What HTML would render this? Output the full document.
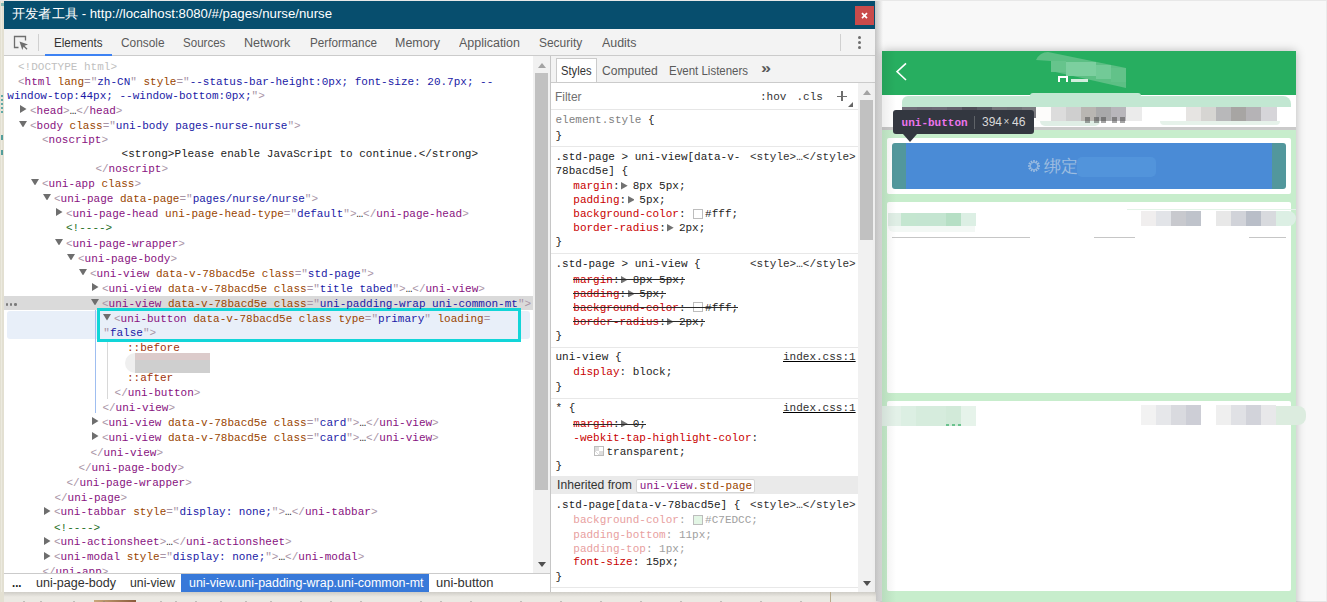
<!DOCTYPE html>
<html><head><meta charset="utf-8"><style>
*{margin:0;padding:0;box-sizing:border-box}
html,body{width:1327px;height:602px;overflow:hidden;background:#f8f8f8;position:relative}
body>div{position:absolute}
.m{font-family:"Liberation Mono", monospace;font-size:11px;line-height:14px;white-space:pre}
.s{font-family:"Liberation Sans", sans-serif;white-space:pre}
</style></head><body>
<div style="left:0px;top:0px;width:4px;height:602px;background:#e3e0d2;"></div>
<div style="left:1px;top:0px;width:1px;height:602px;background:#eceadf;"></div>
<div style="left:0px;top:592px;width:876px;height:10px;background:#e9e7e0;"></div>
<div style="left:4px;top:592px;width:872px;height:4px;background:linear-gradient(#b9b8b4,#e9e7e0);"></div>
<div style="left:875px;top:0px;width:8px;height:602px;background:linear-gradient(90deg,#c4c4c4,#f8f8f8);"></div>
<div style="left:1325.5px;top:0px;width:1.5px;height:602px;background:#ebebeb;"></div>
<div style="left:876px;top:600.5px;width:451px;height:1.5px;background:#e4e4e4;"></div>
<div style="left:0px;top:0px;width:1327px;height:1px;background:#e8e8e8;"></div>
<div style="left:0px;top:592px;width:876px;height:10px;background:#ebe9e3;"></div>
<div style="left:4px;top:592px;width:872px;height:5px;background:linear-gradient(#cfcdc7,#ebe9e3);"></div>
<div style="left:0px;top:592px;width:4px;height:10px;background:#e3e0d2;"></div>
<div style="left:94px;top:600px;width:42px;height:2px;background:linear-gradient(90deg,#c9a77a,#8a5a3a);"></div>
<div style="left:23px;top:600.5px;width:2px;height:1.5px;background:#7a7a7a;opacity:0.4;"></div>
<div style="left:40px;top:600.5px;width:2px;height:1.5px;background:#7a7a7a;opacity:0.4;"></div>
<div style="left:73px;top:600.5px;width:2px;height:1.5px;background:#7a7a7a;opacity:0.4;"></div>
<div style="left:103px;top:600.5px;width:2px;height:1.5px;background:#7a7a7a;opacity:0.4;"></div>
<div style="left:160px;top:600.5px;width:2px;height:1.5px;background:#7a7a7a;opacity:0.4;"></div>
<div style="left:175px;top:600.5px;width:2px;height:1.5px;background:#7a7a7a;opacity:0.4;"></div>
<div style="left:195px;top:600.5px;width:2px;height:1.5px;background:#7a7a7a;opacity:0.4;"></div>
<div style="left:220px;top:600.5px;width:2px;height:1.5px;background:#7a7a7a;opacity:0.4;"></div>
<div style="left:245px;top:600.5px;width:2px;height:1.5px;background:#7a7a7a;opacity:0.4;"></div>
<div style="left:270px;top:600.5px;width:2px;height:1.5px;background:#7a7a7a;opacity:0.4;"></div>
<div style="left:300px;top:600.5px;width:2px;height:1.5px;background:#7a7a7a;opacity:0.4;"></div>
<div style="left:330px;top:600.5px;width:2px;height:1.5px;background:#7a7a7a;opacity:0.4;"></div>
<div style="left:360px;top:600.5px;width:2px;height:1.5px;background:#7a7a7a;opacity:0.4;"></div>
<div style="left:420px;top:600.5px;width:2px;height:1.5px;background:#7a7a7a;opacity:0.4;"></div>
<div style="left:440px;top:600.5px;width:2px;height:1.5px;background:#7a7a7a;opacity:0.4;"></div>
<div style="left:470px;top:600.5px;width:2px;height:1.5px;background:#7a7a7a;opacity:0.4;"></div>
<div style="left:520px;top:600.5px;width:2px;height:1.5px;background:#7a7a7a;opacity:0.4;"></div>
<div style="left:560px;top:600.5px;width:2px;height:1.5px;background:#7a7a7a;opacity:0.4;"></div>
<div style="left:600px;top:600.5px;width:2px;height:1.5px;background:#7a7a7a;opacity:0.4;"></div>
<div style="left:640px;top:600.5px;width:2px;height:1.5px;background:#7a7a7a;opacity:0.4;"></div>
<div style="left:680px;top:600.5px;width:2px;height:1.5px;background:#7a7a7a;opacity:0.4;"></div>
<div style="left:720px;top:600.5px;width:2px;height:1.5px;background:#7a7a7a;opacity:0.4;"></div>
<div style="left:760px;top:600.5px;width:2px;height:1.5px;background:#7a7a7a;opacity:0.4;"></div>
<div style="left:800px;top:600.5px;width:2px;height:1.5px;background:#7a7a7a;opacity:0.4;"></div>
<div style="left:830px;top:592px;width:1px;height:10px;background:#b8a98a;"></div>
<div style="left:1px;top:95px;width:2px;height:1.5px;background:#3f9a9a;opacity:0.8;"></div>
<div style="left:1px;top:99px;width:2px;height:1.5px;background:#3f9a9a;opacity:0.8;"></div>
<div style="left:1px;top:103px;width:2px;height:1.5px;background:#3f9a9a;opacity:0.8;"></div>
<div style="left:1px;top:107px;width:2px;height:1.5px;background:#3f9a9a;opacity:0.8;"></div>
<div style="left:1px;top:111px;width:2px;height:1.5px;background:#3f9a9a;opacity:0.8;"></div>
<div style="left:1px;top:135px;width:2px;height:5px;background:#2e8c8c;opacity:0.8;"></div>
<div style="left:1px;top:150px;width:2px;height:5px;background:#2e8c8c;opacity:0.8;"></div>
<div style="left:1px;top:3px;width:3px;height:3px;background:#4aa0a0;opacity:0.6;"></div>
<div style="left:4px;top:1px;width:871px;height:28px;background:#074e6e;"></div>
<div class="s" style="left:12px;top:5.50px;font-size:13px;line-height:16px;color:#ffffff;font-weight:normal;transform:scaleX(1.0157);transform-origin:0 0;">开发者工具 - http://localhost:8080/#/pages/nurse/nurse</div>
<div style="left:855px;top:6px;width:19px;height:19px;background:#c94b4b;"></div>
<div style="left:860px;top:11px;width:10px;height:10px"><svg style="display:block" width="10" height="10"><path d="M2 2.2L7 7.2M7 2.2L2 7.2" stroke="#fff" stroke-width="1.7"/></svg></div>
<div style="left:4px;top:29px;width:871px;height:26px;background:#f3f3f3;"></div>
<div style="left:4px;top:55px;width:871px;height:1px;background:#cbcbcb;"></div>
<div style="left:13px;top:35px;width:16px;height:16px"><svg style="display:block" width="16" height="16" viewBox="0 0 16 16"><path d="M5.5 12.5H1.5V1.5H12.5V5.5" fill="none" stroke="#6e6e6e" stroke-width="1.3"/><path d="M6.5 6.5L15 9.5L11.5 10.8L14.5 13.8L13.6 14.7L10.6 11.7L9.3 15Z" fill="#6e6e6e"/></svg></div>
<div style="left:38px;top:34px;width:1px;height:17px;background:#d0d0d0;"></div>
<div class="s" style="left:54.2px;top:35.84px;font-size:12px;line-height:14px;color:#333333;font-weight:normal;transform:scaleX(0.9694);transform-origin:0 0;">Elements</div>
<div class="s" style="left:120.9px;top:35.84px;font-size:12px;line-height:14px;color:#5a5a5a;font-weight:normal;transform:scaleX(0.9879);transform-origin:0 0;">Console</div>
<div class="s" style="left:183.1px;top:35.84px;font-size:12px;line-height:14px;color:#5a5a5a;font-weight:normal;transform:scaleX(0.9630);transform-origin:0 0;">Sources</div>
<div class="s" style="left:244.1px;top:35.84px;font-size:12px;line-height:14px;color:#5a5a5a;font-weight:normal;transform:scaleX(1.0496);transform-origin:0 0;">Network</div>
<div class="s" style="left:309.7px;top:35.84px;font-size:12px;line-height:14px;color:#5a5a5a;font-weight:normal;transform:scaleX(0.9752);transform-origin:0 0;">Performance</div>
<div class="s" style="left:395.3px;top:35.84px;font-size:12px;line-height:14px;color:#5a5a5a;font-weight:normal;transform:scaleX(1.0382);transform-origin:0 0;">Memory</div>
<div class="s" style="left:459.1px;top:35.84px;font-size:12px;line-height:14px;color:#5a5a5a;font-weight:normal;transform:scaleX(1.0389);transform-origin:0 0;">Application</div>
<div class="s" style="left:539.0px;top:35.84px;font-size:12px;line-height:14px;color:#5a5a5a;font-weight:normal;transform:scaleX(0.9963);transform-origin:0 0;">Security</div>
<div class="s" style="left:601.5px;top:35.84px;font-size:12px;line-height:14px;color:#5a5a5a;font-weight:normal;transform:scaleX(1.0342);transform-origin:0 0;">Audits</div>
<div style="left:45px;top:54px;width:67px;height:2px;background:#3d82f3;"></div>
<div style="left:840px;top:34px;width:1px;height:17px;background:#d0d0d0;"></div>
<div style="left:857.5px;top:35.5px;width:3px;height:3px;border-radius:50%;background:#6e6e6e"></div>
<div style="left:857.5px;top:40.5px;width:3px;height:3px;border-radius:50%;background:#6e6e6e"></div>
<div style="left:857.5px;top:45.5px;width:3px;height:3px;border-radius:50%;background:#6e6e6e"></div>
<div style="left:4px;top:56px;width:546px;height:517px;background:#ffffff;"></div>
<div style="left:4px;top:296px;width:529px;height:13.5px;background:#dadada;"></div>
<div style="left:5.7px;top:303.3px;width:2.6px;height:2.6px;border-radius:50%;background:#7a7a7a"></div>
<div style="left:9.899999999999999px;top:303.3px;width:2.6px;height:2.6px;border-radius:50%;background:#7a7a7a"></div>
<div style="left:14.1px;top:303.3px;width:2.6px;height:2.6px;border-radius:50%;background:#7a7a7a"></div>
<div style="left:7px;top:311px;width:523px;height:28px;background:#e8eff9;border-radius:3px;"></div>
<div style="left:97px;top:308px;width:424px;height:34px;background:transparent;border:3px solid #12d5d8;"></div>
<div style="left:95px;top:310px;width:1px;height:103px;background:#9fbef0;"></div>
<div style="left:107px;top:342px;width:1px;height:57px;background:#d8d8d8;"></div>
<div class="m" style="left:18px;top:59.599999999999994px;"><span style="color:#c0c0c0">&lt;!DOCTYPE html&gt;</span></div>
<div class="m" style="left:18px;top:74.5px;"><span style="color:#a894a6">&lt;</span><span style="color:#881280">html</span><span style="color:#994500"> lang</span><span style="color:#a894a6">="</span><span style="color:#1a1aa6">zh-CN</span><span style="color:#a894a6">"</span><span style="color:#994500"> style</span><span style="color:#a894a6">="</span><span style="color:#1a1aa6">--status-bar-height:0px; font-size: 20.7px; --</span></div>
<div class="m" style="left:7.3px;top:88.9px;"><span style="color:#1a1aa6">window-top:44px; --window-bottom:0px;</span><span style="color:#a894a6">"&gt;</span></div>
<div class="m" style="left:30px;top:103.5px;"><span style="color:#a894a6">&lt;</span><span style="color:#881280">head</span><span style="color:#a894a6">&gt;</span><span style="color:#222222">…</span><span style="color:#a894a6">&lt;/</span><span style="color:#881280">head</span><span style="color:#a894a6">&gt;</span></div>
<div style="left:20px;top:104.7px;width:6.5px;height:8px"><svg width="6.5" height="8" style="display:block"><polygon points="0,0 6.5,4.0 0,8" fill="#6e6e6e"/></svg></div>
<div class="m" style="left:30px;top:118.5px;"><span style="color:#a894a6">&lt;</span><span style="color:#881280">body</span><span style="color:#994500"> class</span><span style="color:#a894a6">="</span><span style="color:#1a1aa6">uni-body pages-nurse-nurse</span><span style="color:#a894a6">"&gt;</span></div>
<div style="left:19px;top:120.7px;width:8px;height:6.5px"><svg width="8" height="6.5" style="display:block"><polygon points="0,0 8,0 4.0,6.5" fill="#6e6e6e"/></svg></div>
<div class="m" style="left:42px;top:133.3px;"><span style="color:#a894a6">&lt;</span><span style="color:#881280">noscript</span><span style="color:#a894a6">&gt;</span></div>
<div class="m" style="left:121.6px;top:147.4px;"><span style="color:#222222">&lt;strong&gt;Please enable JavaScript to continue.&lt;/strong&gt;</span></div>
<div class="m" style="left:95.4px;top:161.5px;"><span style="color:#a894a6">&lt;/</span><span style="color:#881280">noscript</span><span style="color:#a894a6">&gt;</span></div>
<div class="m" style="left:42px;top:176.6px;"><span style="color:#a894a6">&lt;</span><span style="color:#881280">uni-app</span><span style="color:#994500"> class</span><span style="color:#a894a6">&gt;</span></div>
<div style="left:31px;top:178.79999999999998px;width:8px;height:6.5px"><svg width="8" height="6.5" style="display:block"><polygon points="0,0 8,0 4.0,6.5" fill="#6e6e6e"/></svg></div>
<div class="m" style="left:54px;top:191.6px;"><span style="color:#a894a6">&lt;</span><span style="color:#881280">uni-page</span><span style="color:#994500"> data-page</span><span style="color:#a894a6">="</span><span style="color:#1a1aa6">pages/nurse/nurse</span><span style="color:#a894a6">"&gt;</span></div>
<div style="left:43px;top:193.79999999999998px;width:8px;height:6.5px"><svg width="8" height="6.5" style="display:block"><polygon points="0,0 8,0 4.0,6.5" fill="#6e6e6e"/></svg></div>
<div class="m" style="left:66px;top:206.6px;"><span style="color:#a894a6">&lt;</span><span style="color:#881280">uni-page-head</span><span style="color:#994500"> uni-page-head-type</span><span style="color:#a894a6">="</span><span style="color:#1a1aa6">default</span><span style="color:#a894a6">"&gt;</span><span style="color:#222222">…</span><span style="color:#a894a6">&lt;/</span><span style="color:#881280">uni-page-head</span><span style="color:#a894a6">&gt;</span></div>
<div style="left:56px;top:207.79999999999998px;width:6.5px;height:8px"><svg width="6.5" height="8" style="display:block"><polygon points="0,0 6.5,4.0 0,8" fill="#6e6e6e"/></svg></div>
<div class="m" style="left:66px;top:221.4px;"><span style="color:#236e25">&lt;!----&gt;</span></div>
<div class="m" style="left:66px;top:236.6px;"><span style="color:#a894a6">&lt;</span><span style="color:#881280">uni-page-wrapper</span><span style="color:#a894a6">&gt;</span></div>
<div style="left:55px;top:238.79999999999998px;width:8px;height:6.5px"><svg width="8" height="6.5" style="display:block"><polygon points="0,0 8,0 4.0,6.5" fill="#6e6e6e"/></svg></div>
<div class="m" style="left:78px;top:251.60000000000002px;"><span style="color:#a894a6">&lt;</span><span style="color:#881280">uni-page-body</span><span style="color:#a894a6">&gt;</span></div>
<div style="left:67px;top:253.8px;width:8px;height:6.5px"><svg width="8" height="6.5" style="display:block"><polygon points="0,0 8,0 4.0,6.5" fill="#6e6e6e"/></svg></div>
<div class="m" style="left:90px;top:266.6px;"><span style="color:#a894a6">&lt;</span><span style="color:#881280">uni-view</span><span style="color:#994500"> data-v-78bacd5e class</span><span style="color:#a894a6">="</span><span style="color:#1a1aa6">std-page</span><span style="color:#a894a6">"&gt;</span></div>
<div style="left:79px;top:268.8px;width:8px;height:6.5px"><svg width="8" height="6.5" style="display:block"><polygon points="0,0 8,0 4.0,6.5" fill="#6e6e6e"/></svg></div>
<div class="m" style="left:102px;top:281.5px;"><span style="color:#a894a6">&lt;</span><span style="color:#881280">uni-view</span><span style="color:#994500"> data-v-78bacd5e class</span><span style="color:#a894a6">="</span><span style="color:#1a1aa6">title tabed</span><span style="color:#a894a6">"&gt;</span><span style="color:#222222">…</span><span style="color:#a894a6">&lt;/</span><span style="color:#881280">uni-view</span><span style="color:#a894a6">&gt;</span></div>
<div style="left:92px;top:282.7px;width:6.5px;height:8px"><svg width="6.5" height="8" style="display:block"><polygon points="0,0 6.5,4.0 0,8" fill="#6e6e6e"/></svg></div>
<div class="m" style="left:102px;top:296.6px;"><span style="color:#a894a6">&lt;</span><span style="color:#881280">uni-view</span><span style="color:#994500"> data-v-78bacd5e class</span><span style="color:#a894a6">="</span><span style="color:#1a1aa6">uni-padding-wrap uni-common-mt</span><span style="color:#a894a6">"&gt;</span></div>
<div style="left:91px;top:298.8px;width:8px;height:6.5px"><svg width="8" height="6.5" style="display:block"><polygon points="0,0 8,0 4.0,6.5" fill="#6e6e6e"/></svg></div>
<div class="m" style="left:114px;top:311.8px;"><span style="color:#a894a6">&lt;</span><span style="color:#881280">uni-button</span><span style="color:#994500"> data-v-78bacd5e class type</span><span style="color:#a894a6">="</span><span style="color:#1a1aa6">primary</span><span style="color:#a894a6">"</span><span style="color:#994500"> loading</span><span style="color:#a894a6">=</span></div>
<div class="m" style="left:103.3px;top:325.8px;"><span style="color:#a894a6">"</span><span style="color:#1a1aa6">false</span><span style="color:#a894a6">"&gt;</span></div>
<div style="left:103px;top:314.0px;width:8px;height:6.5px"><svg width="8" height="6.5" style="display:block"><polygon points="0,0 8,0 4.0,6.5" fill="#6e6e6e"/></svg></div>
<div class="m" style="left:127px;top:341.0px;"><span style="color:#a0320a">::before</span></div>
<div class="m" style="left:127px;top:370.8px;"><span style="color:#a0320a">::after</span></div>
<div class="m" style="left:114.6px;top:385.8px;"><span style="color:#a894a6">&lt;/</span><span style="color:#881280">uni-button</span><span style="color:#a894a6">&gt;</span></div>
<div class="m" style="left:102.4px;top:400.8px;"><span style="color:#a894a6">&lt;/</span><span style="color:#881280">uni-view</span><span style="color:#a894a6">&gt;</span></div>
<div class="m" style="left:102px;top:415.8px;"><span style="color:#a894a6">&lt;</span><span style="color:#881280">uni-view</span><span style="color:#994500"> data-v-78bacd5e class</span><span style="color:#a894a6">="</span><span style="color:#1a1aa6">card</span><span style="color:#a894a6">"&gt;</span><span style="color:#222222">…</span><span style="color:#a894a6">&lt;/</span><span style="color:#881280">uni-view</span><span style="color:#a894a6">&gt;</span></div>
<div style="left:92px;top:417.0px;width:6.5px;height:8px"><svg width="6.5" height="8" style="display:block"><polygon points="0,0 6.5,4.0 0,8" fill="#6e6e6e"/></svg></div>
<div class="m" style="left:102px;top:430.8px;"><span style="color:#a894a6">&lt;</span><span style="color:#881280">uni-view</span><span style="color:#994500"> data-v-78bacd5e class</span><span style="color:#a894a6">="</span><span style="color:#1a1aa6">card</span><span style="color:#a894a6">"&gt;</span><span style="color:#222222">…</span><span style="color:#a894a6">&lt;/</span><span style="color:#881280">uni-view</span><span style="color:#a894a6">&gt;</span></div>
<div style="left:92px;top:432.0px;width:6.5px;height:8px"><svg width="6.5" height="8" style="display:block"><polygon points="0,0 6.5,4.0 0,8" fill="#6e6e6e"/></svg></div>
<div class="m" style="left:90.4px;top:445.8px;"><span style="color:#a894a6">&lt;/</span><span style="color:#881280">uni-view</span><span style="color:#a894a6">&gt;</span></div>
<div class="m" style="left:78.4px;top:460.8px;"><span style="color:#a894a6">&lt;/</span><span style="color:#881280">uni-page-body</span><span style="color:#a894a6">&gt;</span></div>
<div class="m" style="left:66.4px;top:475.8px;"><span style="color:#a894a6">&lt;/</span><span style="color:#881280">uni-page-wrapper</span><span style="color:#a894a6">&gt;</span></div>
<div class="m" style="left:54.4px;top:490.6px;"><span style="color:#a894a6">&lt;/</span><span style="color:#881280">uni-page</span><span style="color:#a894a6">&gt;</span></div>
<div class="m" style="left:54px;top:505.4px;"><span style="color:#a894a6">&lt;</span><span style="color:#881280">uni-tabbar</span><span style="color:#994500"> style</span><span style="color:#a894a6">="</span><span style="color:#1a1aa6">display: none;</span><span style="color:#a894a6">"&gt;</span><span style="color:#222222">…</span><span style="color:#a894a6">&lt;/</span><span style="color:#881280">uni-tabbar</span><span style="color:#a894a6">&gt;</span></div>
<div style="left:44px;top:506.59999999999997px;width:6.5px;height:8px"><svg width="6.5" height="8" style="display:block"><polygon points="0,0 6.5,4.0 0,8" fill="#6e6e6e"/></svg></div>
<div class="m" style="left:54px;top:520.6px;"><span style="color:#236e25">&lt;!----&gt;</span></div>
<div class="m" style="left:54px;top:535.4px;"><span style="color:#a894a6">&lt;</span><span style="color:#881280">uni-actionsheet</span><span style="color:#a894a6">&gt;</span><span style="color:#222222">…</span><span style="color:#a894a6">&lt;/</span><span style="color:#881280">uni-actionsheet</span><span style="color:#a894a6">&gt;</span></div>
<div style="left:44px;top:536.6px;width:6.5px;height:8px"><svg width="6.5" height="8" style="display:block"><polygon points="0,0 6.5,4.0 0,8" fill="#6e6e6e"/></svg></div>
<div class="m" style="left:54px;top:550.4px;"><span style="color:#a894a6">&lt;</span><span style="color:#881280">uni-modal</span><span style="color:#994500"> style</span><span style="color:#a894a6">="</span><span style="color:#1a1aa6">display: none;</span><span style="color:#a894a6">"&gt;</span><span style="color:#222222">…</span><span style="color:#a894a6">&lt;/</span><span style="color:#881280">uni-modal</span><span style="color:#a894a6">&gt;</span></div>
<div style="left:44px;top:551.6px;width:6.5px;height:8px"><svg width="6.5" height="8" style="display:block"><polygon points="0,0 6.5,4.0 0,8" fill="#6e6e6e"/></svg></div>
<div class="m" style="left:42.4px;top:565.4px;"><span style="color:#a894a6">&lt;/</span><span style="color:#881280">uni-app</span><span style="color:#a894a6">&gt;</span></div>
<div style="left:125px;top:353px;width:85px;height:20px;background:#efefef;border-radius:10px 0 0 10px;"></div>
<div style="left:135px;top:353px;width:75px;height:7px;background:#dccbcb;"></div>
<div style="left:135px;top:360px;width:75px;height:13px;background:#cfcfcf;"></div>
<div style="left:533px;top:56px;width:17px;height:517px;background:#f1f1f1;"></div>
<div style="left:538px;top:63px;width:0;height:0;border-bottom:5px solid #a3a3a3;border-left:4.0px solid transparent;border-right:4.0px solid transparent;"></div>
<div style="left:535px;top:73px;width:13px;height:417px;background:#c1c1c1;"></div>
<div style="left:538px;top:562px;width:0;height:0;border-top:5px solid #505050;border-left:4.0px solid transparent;border-right:4.0px solid transparent;"></div>
<div style="left:4px;top:573px;width:546px;height:1px;background:#cbcbcb;"></div>
<div style="left:4px;top:574px;width:546px;height:18px;background:#ffffff;"></div>
<div class="s" style="left:11.8px;top:576.14px;font-size:12px;line-height:14px;color:#222222;font-weight:bold;transform:scaleX(0.9485);transform-origin:0 0;">...</div>
<div class="s" style="left:36.2px;top:576.14px;font-size:12px;line-height:14px;color:#303030;font-weight:normal;transform:scaleX(1.0426);transform-origin:0 0;">uni-page-body</div>
<div class="s" style="left:129.6px;top:576.14px;font-size:12px;line-height:14px;color:#303030;font-weight:normal;transform:scaleX(1.0224);transform-origin:0 0;">uni-view</div>
<div style="left:181px;top:574px;width:248px;height:18px;background:#3879d9;"></div>
<div class="s" style="left:188.6px;top:576.14px;font-size:12px;line-height:14px;color:#ffffff;font-weight:normal;transform:scaleX(1.0371);transform-origin:0 0;">uni-view.uni-padding-wrap.uni-common-mt</div>
<div class="s" style="left:436.3px;top:576.14px;font-size:12px;line-height:14px;color:#303030;font-weight:normal;transform:scaleX(1.0773);transform-origin:0 0;">uni-button</div>
<div style="left:550px;top:56px;width:1px;height:536px;background:#c6c6c6;"></div>
<div style="left:551px;top:56px;width:324px;height:26px;background:#f3f3f3;"></div>
<div style="left:551px;top:82px;width:324px;height:1px;background:#cbcbcb;"></div>
<div style="left:556px;top:58px;width:41px;height:24px;background:#ffffff;border:1px solid #cbcbcb;border-bottom:none;"></div>
<div class="s" style="left:561.3px;top:63.84px;font-size:12px;line-height:14px;color:#333333;font-weight:normal;transform:scaleX(0.9331);transform-origin:0 0;">Styles</div>
<div class="s" style="left:602.3px;top:63.84px;font-size:12px;line-height:14px;color:#5a5a5a;font-weight:normal;transform:scaleX(1.0077);transform-origin:0 0;">Computed</div>
<div class="s" style="left:669.3px;top:63.84px;font-size:12px;line-height:14px;color:#5a5a5a;font-weight:normal;transform:scaleX(0.9550);transform-origin:0 0;">Event Listeners</div>
<div class="s" style="left:761px;top:59.65px;font-size:14px;line-height:17px;color:#5a5a5a;font-weight:bold;transform:scaleX(1.2826);transform-origin:0 0;">»</div>
<div style="left:551px;top:83px;width:307px;height:26px;background:#ffffff;"></div>
<div style="left:551px;top:109px;width:307px;height:1px;background:#e6e6e6;"></div>
<div class="s" style="left:555.2px;top:89.84px;font-size:12px;line-height:14px;color:#707070;font-weight:normal;transform:scaleX(0.9936);transform-origin:0 0;">Filter</div>
<div class="m" style="left:760px;top:90.3px;"><span style="color:#333333">:hov</span></div>
<div class="m" style="left:796.5px;top:90.3px;"><span style="color:#333333">.cls</span></div>
<div style="left:837px;top:95.5px;width:10px;height:1.2999999999999972px;background:#6e6e6e;"></div>
<div style="left:841.3px;top:91px;width:1.3000000000000682px;height:10px;background:#6e6e6e;"></div>
<div style="left:848px;top:101.5px;width:0;height:0;border-bottom:5px solid #666;border-left:5px solid transparent"></div>
<div style="left:551px;top:110px;width:307px;height:482px;background:#ffffff;"></div>
<div style="left:551px;top:146px;width:307px;height:1px;background:#e8e8e8;"></div>
<div style="left:551px;top:253px;width:307px;height:1px;background:#e8e8e8;"></div>
<div style="left:551px;top:346.5px;width:307px;height:1.0px;background:#e8e8e8;"></div>
<div style="left:551px;top:397.5px;width:307px;height:1.0px;background:#e8e8e8;"></div>
<div class="m" style="left:555.5px;top:112.8px;"><span style="color:#808080">element.style</span><span style="color:#222222"> {</span></div>
<div class="m" style="left:555.5px;top:129px;"><span style="color:#222222">}</span></div>
<div class="m" style="left:555.5px;top:149.7px;"><span style="color:#222222">.std-page &gt; uni-view[data-v-</span></div>
<div class="m" style="left:750.0px;top:149.7px;"><span style="color:#303030">&lt;style&gt;…&lt;/style&gt;</span></div>
<div class="m" style="left:555.5px;top:163.7px;"><span style="color:#222222">78bacd5e] {</span></div>
<div class="m" style="left:573.3px;top:179.4px;"><span style="color:#c80000">margin</span><span style="color:#222222">:</span></div>
<div style="left:621.0px;top:182.20000000000002px;width:6.7px;height:7.5px"><svg width="6.7" height="7.5" style="display:block"><polygon points="0,0 6.7,3.75 0,7.5" fill="#727272"/></svg></div>
<div class="m" style="left:632.7px;top:179.4px;"><span style="color:#222222">8px 5px;</span></div>
<div class="m" style="left:573.3px;top:193.4px;"><span style="color:#c80000">padding</span><span style="color:#222222">:</span></div>
<div style="left:627.5999999999999px;top:196.20000000000002px;width:6.7px;height:7.5px"><svg width="6.7" height="7.5" style="display:block"><polygon points="0,0 6.7,3.75 0,7.5" fill="#727272"/></svg></div>
<div class="m" style="left:639.3px;top:193.4px;"><span style="color:#222222">5px;</span></div>
<div class="m" style="left:573.3px;top:207.4px;"><span style="color:#c80000">background-color</span><span style="color:#222222">:</span></div>
<div style="left:693.1px;top:208.9px;width:10.0px;height:10.0px;background:#ffffff;border:1px solid #bdbdbd;"></div>
<div class="m" style="left:705.1px;top:207.4px;"><span style="color:#222222">#fff;</span></div>
<div class="m" style="left:573.3px;top:221.4px;"><span style="color:#c80000">border-radius</span><span style="color:#222222">:</span></div>
<div style="left:667.1999999999999px;top:224.20000000000002px;width:6.7px;height:7.5px"><svg width="6.7" height="7.5" style="display:block"><polygon points="0,0 6.7,3.75 0,7.5" fill="#727272"/></svg></div>
<div class="m" style="left:678.9px;top:221.4px;"><span style="color:#222222">2px;</span></div>
<div class="m" style="left:555.5px;top:235.4px;"><span style="color:#222222">}</span></div>
<div class="m" style="left:555.5px;top:256.8px;"><span style="color:#222222">.std-page &gt; uni-view {</span></div>
<div class="m" style="left:750.0px;top:256.8px;"><span style="color:#303030">&lt;style&gt;…&lt;/style&gt;</span></div>
<div class="m" style="left:573.3px;top:272.8px;"><span style="color:#c80000">margin</span><span style="color:#222222">:</span></div>
<div style="left:621.0px;top:275.6px;width:6.7px;height:7.5px"><svg width="6.7" height="7.5" style="display:block"><polygon points="0,0 6.7,3.75 0,7.5" fill="#727272"/></svg></div>
<div class="m" style="left:632.7px;top:272.8px;"><span style="color:#222222">8px 5px;</span></div>
<div style="left:573.3px;top:279.3px;width:112.20000000000005px;height:1.0px;background:#2a2a2a;"></div>
<div class="m" style="left:573.3px;top:286.8px;"><span style="color:#c80000">padding</span><span style="color:#222222">:</span></div>
<div style="left:627.5999999999999px;top:289.6px;width:6.7px;height:7.5px"><svg width="6.7" height="7.5" style="display:block"><polygon points="0,0 6.7,3.75 0,7.5" fill="#727272"/></svg></div>
<div class="m" style="left:639.3px;top:286.8px;"><span style="color:#222222">5px;</span></div>
<div style="left:573.3px;top:293.3px;width:92.39999999999998px;height:1.0px;background:#2a2a2a;"></div>
<div class="m" style="left:573.3px;top:300.8px;"><span style="color:#c80000">background-color</span><span style="color:#222222">:</span></div>
<div style="left:693.1px;top:302.3px;width:10.0px;height:10.0px;background:#ffffff;border:1px solid #bdbdbd;"></div>
<div class="m" style="left:705.1px;top:300.8px;"><span style="color:#222222">#fff;</span></div>
<div style="left:573.3px;top:307.3px;width:164.80000000000007px;height:1.0px;background:#2a2a2a;"></div>
<div class="m" style="left:573.3px;top:314.8px;"><span style="color:#c80000">border-radius</span><span style="color:#222222">:</span></div>
<div style="left:667.1999999999999px;top:317.6px;width:6.7px;height:7.5px"><svg width="6.7" height="7.5" style="display:block"><polygon points="0,0 6.7,3.75 0,7.5" fill="#727272"/></svg></div>
<div class="m" style="left:678.9px;top:314.8px;"><span style="color:#222222">2px;</span></div>
<div style="left:573.3px;top:321.3px;width:132.0px;height:1.0px;background:#2a2a2a;"></div>
<div class="m" style="left:555.5px;top:328.8px;"><span style="color:#222222">}</span></div>
<div class="m" style="left:555.5px;top:349.5px;"><span style="color:#222222">uni-view {</span></div>
<div class="m" style="left:783.0px;top:349.5px;text-decoration:underline;"><span style="color:#303030">index.css:1</span></div>
<div class="m" style="left:573.3px;top:365.3px;"><span style="color:#c80000">display</span><span style="color:#222222">:</span></div>
<div class="m" style="left:632.6999999999999px;top:365.3px;"><span style="color:#222222">block;</span></div>
<div class="m" style="left:555.5px;top:379.5px;"><span style="color:#222222">}</span></div>
<div class="m" style="left:555.5px;top:401.4px;"><span style="color:#222222">* {</span></div>
<div class="m" style="left:783.0px;top:401.4px;text-decoration:underline;"><span style="color:#303030">index.css:1</span></div>
<div class="m" style="left:573.3px;top:417px;"><span style="color:#c80000">margin</span><span style="color:#222222">:</span></div>
<div style="left:621.0px;top:419.8px;width:6.7px;height:7.5px"><svg width="6.7" height="7.5" style="display:block"><polygon points="0,0 6.7,3.75 0,7.5" fill="#727272"/></svg></div>
<div class="m" style="left:632.7px;top:417px;"><span style="color:#222222">0;</span></div>
<div style="left:573.3px;top:423.5px;width:72.60000000000014px;height:1.0px;background:#2a2a2a;"></div>
<div class="m" style="left:573.3px;top:430.8px;"><span style="color:#c80000">-webkit-tap-highlight-color</span><span style="color:#222222">:</span></div>
<div style="left:594px;top:445.5px;width:10px;height:10px;border:1px solid #bdbdbd;background:linear-gradient(45deg,#fff 25%,transparent 25%,transparent 75%,#fff 75%),linear-gradient(45deg,#fff 25%,#ddd 25%,#ddd 75%,#fff 75%);background-size:8px 8px;background-position:0 0,4px 4px"></div>
<div class="m" style="left:606.5px;top:444.6px;"><span style="color:#222222">transparent;</span></div>
<div class="m" style="left:555.5px;top:458.8px;"><span style="color:#222222">}</span></div>
<div style="left:551px;top:476px;width:307px;height:18px;background:#eaeaea;"></div>
<div class="s" style="left:556.7px;top:478.34px;font-size:12px;line-height:14px;color:#333333;font-weight:normal;transform:scaleX(1.0129);transform-origin:0 0;">Inherited from</div>
<div style="left:635.5px;top:478.5px;width:119.5px;height:14.5px;background:#ffffff;border:1px solid #d6d6d6;border-radius:2px;"></div>
<div class="m" style="left:639.8px;top:479.2px;"><span style="color:#881280">uni-view</span><span style="color:#994500">.std-page</span></div>
<div class="m" style="left:555.5px;top:497.8px;"><span style="color:#222222">.std-page[data-v-78bacd5e] {</span></div>
<div class="m" style="left:750.0px;top:497.8px;"><span style="color:#303030">&lt;style&gt;…&lt;/style&gt;</span></div>
<div class="m" style="left:573.3px;top:513.4px;"><span style="color:#e8a0a0">background-color</span><span style="color:#a0a0a0">:</span></div>
<div style="left:693.1px;top:514.9px;width:10.0px;height:10.0px;background:#e3f6e5;border:1px solid #bdbdbd;"></div>
<div class="m" style="left:705.1px;top:513.4px;"><span style="color:#a0a0a0">#C7EDCC;</span></div>
<div class="m" style="left:573.3px;top:527.6px;"><span style="color:#e8a0a0">padding-bottom</span><span style="color:#a0a0a0">:</span></div>
<div class="m" style="left:678.9px;top:527.6px;"><span style="color:#a0a0a0">11px;</span></div>
<div class="m" style="left:573.3px;top:541.7px;"><span style="color:#e8a0a0">padding-top</span><span style="color:#a0a0a0">:</span></div>
<div class="m" style="left:659.1px;top:541.7px;"><span style="color:#a0a0a0">1px;</span></div>
<div class="m" style="left:573.3px;top:555.4px;"><span style="color:#c80000">font-size</span><span style="color:#222222">:</span></div>
<div class="m" style="left:645.9px;top:555.4px;"><span style="color:#222222">15px;</span></div>
<div class="m" style="left:555.5px;top:569.5px;"><span style="color:#222222">}</span></div>
<div style="left:551px;top:587px;width:307px;height:1px;background:#e8e8e8;"></div>
<div style="left:858px;top:83px;width:17px;height:509px;background:#f1f1f1;"></div>
<div style="left:862.5px;top:90px;width:0;height:0;border-bottom:5px solid #a3a3a3;border-left:4.0px solid transparent;border-right:4.0px solid transparent;"></div>
<div style="left:860px;top:100px;width:13px;height:140px;background:#c1c1c1;"></div>
<div style="left:862.5px;top:581px;width:0;height:0;border-top:5px solid #505050;border-left:4.0px solid transparent;border-right:4.0px solid transparent;"></div>
<div style="left:882px;top:51px;width:414px;height:560px;box-shadow:0 0 9px rgba(0,0,0,0.26);background:#c7edcc"></div>
<div style="left:882px;top:51px;width:414px;height:44px;background:#27ae60;"></div>
<div style="left:896px;top:62px;width:14px;height:20px"><svg style="display:block" width="14" height="20"><path d="M10 1.3 L1 9.7 L10 18" fill="none" stroke="#fff" stroke-width="1.6"/></svg></div>
<div style="left:1036px;top:52px;width:91px;height:36px"><svg style="display:block" width="91" height="36"><path d="M0 8 Q4 0 12 0 L90 16 L90 36 L15 19 L15 9 Z" fill="#5cbf84"/><rect x="15" y="9" width="15" height="11" fill="#66c48c"/><rect x="30" y="10" width="30" height="14" fill="#7ccf9f"/><rect x="60" y="13" width="15" height="14" fill="#72ca97"/><rect x="75" y="16" width="15" height="14" fill="#62c289"/></svg></div>
<div style="left:1058px;top:76px;width:2px;height:6px;background:#ffffff;"></div>
<div style="left:1058px;top:76px;width:10px;height:1.5px;background:#ffffff;"></div>
<div style="left:1066px;top:78px;width:2px;height:4px;background:#ffffff;"></div>
<div style="left:1071px;top:79px;width:17px;height:3px;background:#e6f5ec;opacity:0.9;"></div>
<div style="left:882px;top:95px;width:414px;height:31.5px;background:#ffffff;"></div>
<div style="left:882px;top:126.5px;width:414px;height:3.0px;background:#cacaca;"></div>
<div style="left:902px;top:95.5px;width:389px;height:11.0px;background:#c2e7d2;border-radius:6px 8px 0 0;"></div>
<div style="left:1030px;top:92.5px;width:111px;height:3.5px;background:#c2e7d2;border-radius:6px 6px 0 0;"></div>
<div style="left:902px;top:106.5px;width:15.5px;height:9.5px;background:#6f6c78;"></div>
<div style="left:917px;top:106.5px;width:15.5px;height:9.5px;background:#6a6773;"></div>
<div style="left:932px;top:106.5px;width:15.5px;height:9.5px;background:#6d6a76;"></div>
<div style="left:947px;top:106.5px;width:15.5px;height:9.5px;background:#63606c;"></div>
<div style="left:962px;top:106.5px;width:15.5px;height:9.5px;background:#4f4e58;"></div>
<div style="left:977px;top:106.5px;width:15.5px;height:9.5px;background:#5b5d66;"></div>
<div style="left:992px;top:106.5px;width:15.5px;height:9.5px;background:#74747a;"></div>
<div style="left:1007px;top:106.5px;width:15.5px;height:9.5px;background:#707277;"></div>
<div style="left:1022px;top:106.5px;width:15.5px;height:9.5px;background:#7b7b80;"></div>
<div style="left:902px;top:116px;width:134px;height:2px;background:#7a7a80;"></div>
<div style="left:1036px;top:106.5px;width:15.5px;height:14.5px;background:#fdfcfb;"></div>
<div style="left:1051px;top:106.5px;width:15.5px;height:14.5px;background:#dcdcdc;"></div>
<div style="left:1066px;top:106.5px;width:15.5px;height:14.5px;background:#cfcfcf;"></div>
<div style="left:1081px;top:106.5px;width:15.5px;height:14.5px;background:#b9b6b2;"></div>
<div style="left:1096px;top:106.5px;width:15.5px;height:14.5px;background:#a9a9aa;"></div>
<div style="left:1111px;top:106.5px;width:15.5px;height:14.5px;background:#b8b6bb;"></div>
<div style="left:1126px;top:106.5px;width:15.5px;height:14.5px;background:#ebebeb;"></div>
<div style="left:1186px;top:106.5px;width:15.5px;height:14.5px;background:#e6e4e2;"></div>
<div style="left:1201px;top:106.5px;width:15.5px;height:14.5px;background:#d6d5d2;"></div>
<div style="left:1216px;top:106.5px;width:15.5px;height:14.5px;background:#b8b8ba;"></div>
<div style="left:1231px;top:106.5px;width:15.5px;height:14.5px;background:#a7a5a3;"></div>
<div style="left:1246px;top:106.5px;width:15.5px;height:14.5px;background:#b5b3b6;"></div>
<div style="left:1261px;top:106.5px;width:15.5px;height:14.5px;background:#d6d5d9;"></div>
<div style="left:1040px;top:121px;width:60px;height:5px;background:#dfeee5;border-radius:0 0 10px 10px;"></div>
<div style="left:1160px;top:121px;width:120px;height:4px;background:#e6f2ea;border-radius:0 0 10px 10px;"></div>
<div style="left:1085px;top:117px;width:5px;height:5.5px;background:#3a3a3a;opacity:0.45;"></div>
<div style="left:1094px;top:117px;width:5px;height:5.5px;background:#3a3a3a;opacity:0.45;"></div>
<div style="left:1101px;top:117px;width:5px;height:5.5px;background:#3a3a3a;opacity:0.45;"></div>
<div style="left:1112px;top:117px;width:5px;height:5.5px;background:#3a3a3a;opacity:0.45;"></div>
<div style="left:1120px;top:117px;width:5px;height:5.5px;background:#3a3a3a;opacity:0.45;"></div>
<div style="left:887px;top:138px;width:404px;height:56px;background:#ffffff;border-radius:2px;"></div>
<div style="left:892px;top:143px;width:394px;height:46px;background:#52979c;border-radius:3px;"></div>
<div style="left:906px;top:143px;width:366px;height:46px;background:#4a8bd6;"></div>
<div class="s" style="left:1044px;top:157.11px;font-size:17px;line-height:20px;color:#9dbde0;font-weight:normal;">绑定</div>
<div style="left:1027px;top:159px;width:14px;height:14px"><svg style="display:block" width="14" height="14" viewBox="0 0 14 14"><line x1="7" y1="1" x2="7" y2="4" stroke="#9dbde0" stroke-width="1.6" transform="rotate(0 7 7)"/><line x1="7" y1="1" x2="7" y2="4" stroke="#9dbde0" stroke-width="1.6" transform="rotate(30 7 7)"/><line x1="7" y1="1" x2="7" y2="4" stroke="#9dbde0" stroke-width="1.6" transform="rotate(60 7 7)"/><line x1="7" y1="1" x2="7" y2="4" stroke="#9dbde0" stroke-width="1.6" transform="rotate(90 7 7)"/><line x1="7" y1="1" x2="7" y2="4" stroke="#9dbde0" stroke-width="1.6" transform="rotate(120 7 7)"/><line x1="7" y1="1" x2="7" y2="4" stroke="#9dbde0" stroke-width="1.6" transform="rotate(150 7 7)"/><line x1="7" y1="1" x2="7" y2="4" stroke="#9dbde0" stroke-width="1.6" transform="rotate(180 7 7)"/><line x1="7" y1="1" x2="7" y2="4" stroke="#9dbde0" stroke-width="1.6" transform="rotate(210 7 7)"/><line x1="7" y1="1" x2="7" y2="4" stroke="#9dbde0" stroke-width="1.6" transform="rotate(240 7 7)"/><line x1="7" y1="1" x2="7" y2="4" stroke="#9dbde0" stroke-width="1.6" transform="rotate(270 7 7)"/><line x1="7" y1="1" x2="7" y2="4" stroke="#9dbde0" stroke-width="1.6" transform="rotate(300 7 7)"/><line x1="7" y1="1" x2="7" y2="4" stroke="#9dbde0" stroke-width="1.6" transform="rotate(330 7 7)"/></svg></div>
<div style="left:1077px;top:157px;width:79px;height:20px;background:#5294db;border-radius:5px;"></div>
<div style="left:887px;top:202px;width:404px;height:191px;background:#ffffff;border-radius:2px;"></div>
<div style="left:888px;top:213px;width:13px;height:13px;background:#dfeee5;"></div>
<div style="left:901px;top:213px;width:15px;height:13px;background:#c4e6d0;"></div>
<div style="left:916px;top:213px;width:30px;height:13px;background:#c4e5d1;"></div>
<div style="left:946px;top:213px;width:15px;height:13px;background:#b6dfc5;"></div>
<div style="left:961px;top:213px;width:15px;height:13px;background:#dcefe4;"></div>
<div style="left:888px;top:226px;width:87px;height:6px;background:#f3f8f5;border-radius:0 0 0 8px;"></div>
<div style="left:1141px;top:211px;width:15.299999999999955px;height:15px;background:#f0eeee;"></div>
<div style="left:1156px;top:211px;width:15.299999999999955px;height:15px;background:#e2e4e8;"></div>
<div style="left:1171px;top:211px;width:15.299999999999955px;height:15px;background:#c8c9ce;"></div>
<div style="left:1186px;top:211px;width:15.299999999999955px;height:15px;background:#bfc3cb;"></div>
<div style="left:1201px;top:211px;width:15.299999999999955px;height:15px;background:#ffffff;"></div>
<div style="left:1216px;top:211px;width:15.299999999999955px;height:15px;background:#e8e8e8;"></div>
<div style="left:1231px;top:211px;width:15.299999999999955px;height:15px;background:#d1d3d9;"></div>
<div style="left:1246px;top:211px;width:15.299999999999955px;height:15px;background:#b9bec8;"></div>
<div style="left:1261px;top:211px;width:15.299999999999955px;height:15px;background:#d8dade;"></div>
<div style="left:1276px;top:211px;width:20px;height:15px;background:#dcefe4;border-radius:0 8px 8px 0;"></div>
<div style="left:1127px;top:209px;width:169px;height:1px;background:#e3f3e8;"></div>
<div style="left:892px;top:237px;width:138px;height:1.3000000000000114px;background:#c6c6c6;"></div>
<div style="left:1094px;top:237px;width:41px;height:1.3000000000000114px;background:#c6c6c6;"></div>
<div style="left:1249px;top:237px;width:37px;height:1.3000000000000114px;background:#c6c6c6;"></div>
<div style="left:887px;top:401px;width:404px;height:190px;background:#ffffff;border-radius:2px;"></div>
<div style="left:882px;top:406px;width:19px;height:20px;background:#e3f1e8;"></div>
<div style="left:901px;top:406px;width:15px;height:20px;background:#dcefe3;"></div>
<div style="left:916px;top:406px;width:30px;height:20px;background:#d6ecdd;"></div>
<div style="left:946px;top:406px;width:15px;height:20px;background:#d2ead9;"></div>
<div style="left:961px;top:406px;width:15px;height:20px;background:#e6f3ea;"></div>
<div style="left:946px;top:423.5px;width:3px;height:2.5px;background:#3fb06e;opacity:0.7;"></div>
<div style="left:952px;top:423.5px;width:3px;height:2.5px;background:#3fb06e;opacity:0.7;"></div>
<div style="left:958px;top:423.5px;width:3px;height:2.5px;background:#3fb06e;opacity:0.7;"></div>
<div style="left:1141px;top:405px;width:15.299999999999955px;height:20px;background:#f2f2f2;"></div>
<div style="left:1156px;top:405px;width:15.299999999999955px;height:20px;background:#e6e7ea;"></div>
<div style="left:1171px;top:405px;width:15.299999999999955px;height:20px;background:#d9dadf;"></div>
<div style="left:1186px;top:405px;width:15.299999999999955px;height:20px;background:#cdced6;"></div>
<div style="left:1201px;top:405px;width:15.299999999999955px;height:20px;background:#ffffff;"></div>
<div style="left:1216px;top:405px;width:15.299999999999955px;height:20px;background:#efefef;"></div>
<div style="left:1231px;top:405px;width:15.299999999999955px;height:20px;background:#e0e1e5;"></div>
<div style="left:1246px;top:405px;width:15.299999999999955px;height:20px;background:#d2d3da;"></div>
<div style="left:1261px;top:405px;width:15.299999999999955px;height:20px;background:#e8e8ea;"></div>
<div style="left:1276px;top:406px;width:30px;height:19px;background:#dcecdf;border-radius:0 8px 8px 0;"></div>
<div style="left:882px;top:51px;width:14px;height:551px;background:linear-gradient(90deg,rgba(0,0,0,0.07),rgba(0,0,0,0));"></div>
<div style="left:893px;top:110px;width:141px;height:24px;background:#333740;border-radius:3px;"></div>
<div style="left:903px;top:133.5px;width:0;height:0;border-top:8px solid #333740;border-left:7.7px solid transparent;border-right:7.7px solid transparent"></div>
<div class="m" style="left:901.6px;top:115.6px;font-weight:bold;"><span style="color:#ec74ec">uni-button</span></div>
<div style="left:974px;top:116px;width:1px;height:13px;background:#5f6368;"></div>
<div class="s" style="left:982px;top:114.67px;font-size:12.5px;line-height:15px;color:#d9d9d9;font-weight:normal;transform:scaleX(0.9588);transform-origin:0 0;">394</div>
<div class="s" style="left:1003.5px;top:116.03px;font-size:10px;line-height:12px;color:#d9d9d9;font-weight:normal;">×</div>
<div class="s" style="left:1011.8px;top:114.67px;font-size:12.5px;line-height:15px;color:#d9d9d9;font-weight:normal;transform:scaleX(0.9708);transform-origin:0 0;">46</div>
</body></html>
